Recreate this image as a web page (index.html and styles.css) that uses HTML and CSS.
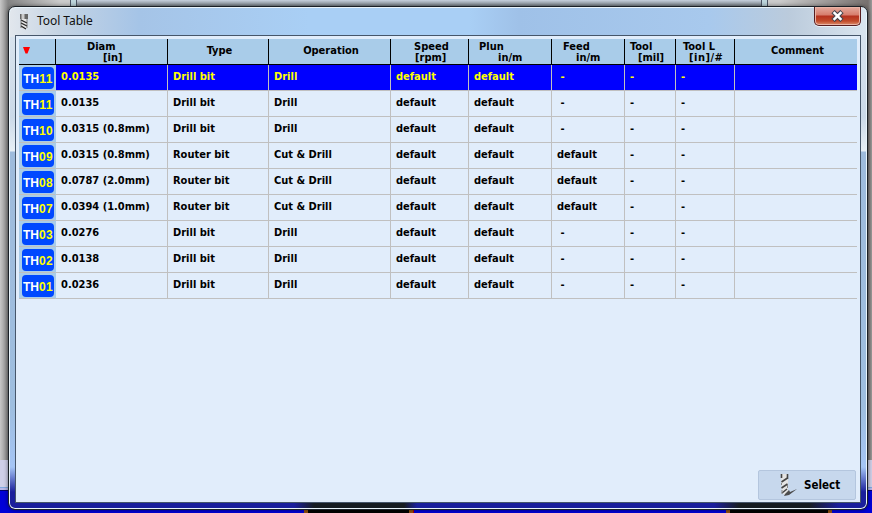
FILE: index.html
```html
<!DOCTYPE html>
<html lang="en">
<head>
<meta charset="utf-8">
<title>Tool Table</title>
<link rel="stylesheet" href="styles.css">
</head>
<body>
<main class="window">
  <header class="titlebar">
    <svg class="bit" width="10" height="17" viewBox="0 0 10 17"><path d="M1 1h8v5H1z" fill="#666"/><path d="M2.500 1h3v5h-3z" fill="#ccc"/><path d="M2 6h6v9l-3 1-3-1z" fill="#e6e6e6"/><path d="M2 7l6 3M2 10l6 3M2 13l5 3" stroke="#222" stroke-width="1.300"/><path d="M2 6v9M8 6v9" stroke="#555" stroke-width=".7"/></svg>
    <h1>Tool Table</h1>
    <button class="close" aria-label="Close"><svg width="14" height="12" viewBox="0 0 14 12"><path d="M2 1.500l9 9M11 1.500l-9 9" stroke="#46464f" stroke-width="4.600"/><path d="M2.600 2.200l7.800 7.600M10.400 2.200l-7.800 7.600" stroke="#fff" stroke-width="2.500"/></svg></button>
  </header>
  <section class="client">
    <div class="table" id="table">
      <div class="row head">
        <div class="mark"><svg width="7" height="7" viewBox="0 0 7 7"><path d="M0 0h7L4.500 6.500h-2z" fill="#f00"/></svg></div>
        <div class="two diam"><span>Diam</span><span>[in]</span></div>
        <div class="one">Type</div>
        <div class="one">Operation</div>
        <div class="two speed"><span>Speed</span><span>[rpm]</span></div>
        <div class="two plun"><span>Plun</span><span>in/m</span></div>
        <div class="two feed"><span>Feed</span><span>in/m</span></div>
        <div class="two tool"><span>Tool</span><span>[mil]</span></div>
        <div class="two tooll"><span>Tool L</span><span>[in]/#</span></div>
        <div class="one">Comment</div>
      </div>
    </div>
    <footer><button class="select"><svg width="18" height="24" viewBox="0 0 18 24"><path d="M2 1h7v20l-3 1-3-2z" fill="#e4e4e4"/><path d="M2.500 1v4M8.500 1v5M2.500 9l6-4M2.500 15l6-4M3 20l5-4" stroke="#444" stroke-width="1.600"/><path d="M2.500 10v2M8.500 12v3M3 17v4" stroke="#888"/><path d="M6 21l4-4 1 2 7-3-8 6-5 1z" fill="#4c4c4c"/></svg>Select</button></footer>
  </section>
</main>
<script src="script.js"></script>
</body>
</html>
```
FILE: styles.css
```css
* { box-sizing: border-box; }
body {
  margin: 0; height: 513px; overflow: hidden; padding: 6px 4px 3px 8px;
  background:
    linear-gradient(90deg, #4b5565 1px, #bdd5dc 1px 6px, #4b5565 6px) 70px 0 / 7px 6px no-repeat,
    linear-gradient(90deg, #4b5565 1px, #bdd5dc 1px 6px, #4b5565 6px) 761px 0 / 7px 6px no-repeat,
    linear-gradient(#c6d0dd, #7b838a) 71px 0 / 691px 6px no-repeat,
    linear-gradient(90deg, #905010 4px, #000 4px 105px, #905010 105px 109px, #b00000 109px) 304px 509px / 110px 4px no-repeat,
    linear-gradient(90deg, #905010 4px, #000 4px 102px, #905010 102px) 726px 509px / 106px 4px no-repeat,
    linear-gradient(#cfcfe8 27px, #7fa8e0 27px 28px, #b7b7e8 28px 30px, #00006a 30px 31px, #0000d8 31px) 0 460px / 100% 53px no-repeat,
    linear-gradient(90deg, #c8c8c8, #858585 8px, #ccc 60px 780px, #77716f 868px, #9b9b9b);
}
button { font: inherit; padding: 0; }
.window {
  width: 860px; height: 504px; display: flex; flex-direction: column;
  padding: 1px 6px 6px; border: 1px solid #1a2026; border-radius: 7px;
  box-shadow: inset 0 0 0 1px #e9f4fb, 0 0 4px #0008;
  background:
    linear-gradient(#aab4d0, #aab4d0) 6px 495px / 846px 1px no-repeat,
    linear-gradient(90deg, #1a1f9c 0 285px, #171d22 305px 395px, #1a1f9c 408px 705px, #171d22 730px 800px, #1a1f9c 830px) 0 100% / 100% 8px no-repeat,
    linear-gradient(90deg, #e2e7ed, #c5d4e4 50px, #a5c4e7 130px, #a9cff5 300px 460px, #9fc1e8 510px, #a8c9ed 700px, #bbcbdc 780px, #dae5ef) 0 0 / 100% 30px no-repeat,
    linear-gradient(#dce6f0, #cbd9e8 110px, #e7eff6 144px, #9ebbdc 145px, #9ebedf 400px, #a5c5f5 460px, #1a1f9c 485px);
}
.titlebar { flex: 0 0 27px; display: flex; align-items: flex-start; padding-left: 4px; }
.bit { margin: 5px 8px 0 0; }
h1 { margin: 4px auto 0 0; font: 12px/17px "Noto Sans", sans-serif; letter-spacing: -.05px; color: #111; }
.close {
  width: 47px; height: 19px; margin-top: -1px; border: 1px solid #571d20; border-top: 0; border-radius: 0 0 5px 5px;
  display: grid; place-items: center;
  background: linear-gradient(#e4aa9e, #d77d6c 8px, #b5311e 9px, #c24b2b 14px, #dc8e6d); box-shadow: inset 0 0 0 1px #eab5a7, 0 1px #e9f2f8;
}
.client {
  flex: 1; min-height: 0; border: 1px solid #46566a; background: #e1edfb;
  display: flex; flex-direction: column; justify-content: space-between; padding: 3px 3px 1px;
  font: bold 11px/13px "DejaVu Sans Condensed", "DejaVu Sans", sans-serif; font-stretch: condensed; color: #000;
}
.row { display: grid; grid-template-columns: 37px 112px 101px 122px 78px 83px 73px 51px 59px 122px; height: 26px; }
.row > div { border-right: 1px solid #c0c0c0; border-bottom: 1px solid #c0c0c0; padding: 5px 0 0 5px; white-space: pre; }
.row > div:last-child { border-right: 0; }
.row > .id { background: #a9cce9; padding: 2px 1px 0 3px; border-right-color: #a9cce9; }
.id b { display: block; height: 22px; background: #0048ff; border-radius: 4px; color: #fff; font: bold 12px/24px "Liberation Sans", sans-serif; text-align: center; }
.id i { color: #ff0; font-style: normal; letter-spacing: .4px; }
.selected > div:not(.id) { background: #00f; color: #ff0; }
.row.head > div { background: #a9cce9; border-color: #000; padding: 0; }
.row.head > .mark { padding: 8px 0 0 4px; }
.mark svg { display: block; }
.row.head > .one { text-align: center; padding: 5px 0 0 3px; }
.two span { display: block; line-height: 11px; }
.row.head > .two { padding-top: 2px; }
.diam span { margin-left: 31px; } .diam span + span { margin-left: 47px; }
.speed span { margin-left: 23px; } .speed span + span { margin-left: 24px; }
.plun span { margin-left: 10px; } .plun span + span { margin-left: 29px; }
.feed span { margin-left: 11px; } .feed span + span { margin-left: 24px; }
.tool span { margin-left: 5px; } .tool span + span { margin-left: 13px; }
.tooll span { margin-left: 7px; } .tooll span + span { margin-left: 13px; letter-spacing: .5px; }
footer { display: flex; justify-content: flex-end; padding: 0 1px 1px 0; }
.select { width: 98px; height: 30px; background: #c7d8ed; border: 1px solid #b4c6de; border-radius: 2px; display: flex; align-items: center; padding-left: 20px; gap: 7px; font-size: 11.5px; color: #000; }
```
FILE: script.js
```js
const tools = [
  ["11", "0.0135", 0], ["11", "0.0135", 0], ["10", "0.0315 (0.8mm)", 0],
  ["09", "0.0315 (0.8mm)", 1], ["08", "0.0787 (2.0mm)", 1], ["07", "0.0394 (1.0mm)", 1],
  ["03", "0.0276", 0], ["02", "0.0138", 0], ["01", "0.0236", 0]
];
const table = document.getElementById("table");
tools.forEach(([id, diameter, router], index) => {
  const row = document.createElement("div");
  row.className = index ? "row" : "row selected";
  const cells = [diameter, router ? "Router bit" : "Drill bit", router ? "Cut & Drill" : "Drill", "default", "default", router ? "default" : " -", "-", "-", ""];
  row.innerHTML = `<div class="id"><b>TH<i>${id}</i></b></div>`;
  cells.forEach(text => { const cell = document.createElement("div"); cell.textContent = text; row.append(cell); });
  table.append(row);
});
```
